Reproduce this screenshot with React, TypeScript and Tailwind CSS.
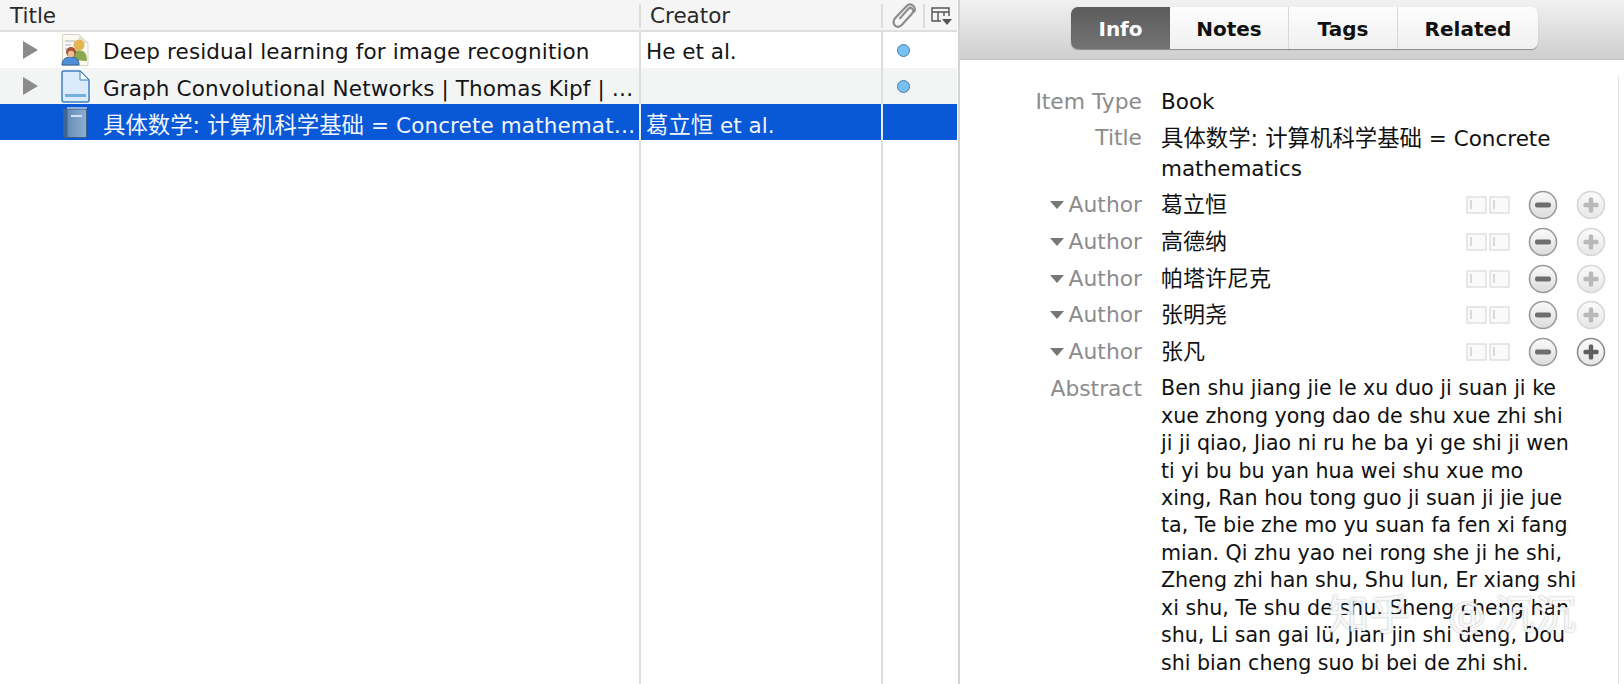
const FONT = "font-['DejaVu_Sans','Noto_Sans_CJK_SC',sans-serif]";

function Arrow() {
  return (
    <svg width="15" height="18" viewBox="0 0 15 18">
      <path d="M0 0 L15 9 L0 18 Z" fill="#8b8b8b" />
    </svg>
  );
}

function PeopleIcon() {
  return (
    <svg width="28" height="32" viewBox="0 0 28 32">
      <path d="M1.5 .5 H18 L27 9 V31.5 H1.5 Z" fill="#fbfaf2" stroke="#d8d4c4" />
      <path d="M18 .5 V9 H27 Z" fill="#e4e0d0" />
      <path d="M4 7 H14 M4 11 H10 M4 15 H8" stroke="#c9c9c9" strokeWidth="1.5" />
      <circle cx="18" cy="11" r="5.5" fill="#e5b455" />
      <path d="M10 26 C10 18 14 16 18 16.5 C23 16 26 19 26 27 Z" fill="#8aa94c" />
      <circle cx="10" cy="18" r="5" fill="#a9543a" />
      <path d="M1 31 C1 25 5 23 10 23 C15 23 18 25 18 31 Z" fill="#4f8fd8" stroke="#2f5e9c" />
      <circle cx="10" cy="20" r="3.2" fill="#efbd95" />
    </svg>
  );
}

function PageIcon() {
  return (
    <svg width="29" height="33" viewBox="0 0 29 33">
      <path d="M1 3 Q1 1 3 1 H19 L28 10 V30 Q28 32 26 32 H3 Q1 32 1 30 Z" fill="#dcebfb" stroke="#3f7fc0" strokeWidth="1.5" />
      <path d="M19 1 V10 H28 Z" fill="#f7fbff" stroke="#3f7fc0" strokeWidth="1" />
      <rect x="4" y="24" width="21" height="3" fill="#76aede" />
    </svg>
  );
}

function BookIcon() {
  return (
    <svg width="25" height="31" viewBox="0 0 25 31">
      <defs>
        <linearGradient id="bk" x1="0" x2="1" y1="0" y2="0">
          <stop offset="0" stopColor="#5e86b0" />
          <stop offset="1" stopColor="#8fb0d0" />
        </linearGradient>
      </defs>
      <rect x=".5" y="2" width="23" height="28.5" rx="1.5" fill="url(#bk)" stroke="#3d5f86" />
      <rect x=".5" y="2" width="4" height="28.5" fill="#3f6690" />
      <rect x="8" y="8" width="11" height="2" fill="#d4e2f0" />
      <path d="M4 1 H24" stroke="#b9cde0" strokeWidth="1.5" />
    </svg>
  );
}

function Clip() {
  return (
    <svg width="27" height="27" viewBox="0 0 24 24" fill="none" stroke="#8d8d8d" strokeWidth="2">
      <path d="M20 3.5 C18 1.5 15.5 2 14 3.5 L4 14 C1.5 16.5 2 19.5 3.5 21 C5.5 22.5 8 22 9.5 20.5 L19 10 C20 8.5 20 7 19 6 C18 5 16.5 5 15.5 6 L7.5 15" />
      <path d="M20 3.5 C21.5 5 21.5 7.5 20.5 9" />
    </svg>
  );
}

function ColumnPicker() {
  return (
    <svg width="21" height="18" viewBox="0 0 21 18" fill="none" stroke="#555" strokeWidth="1.4">
      <path d="M10 14 H1 V1 H18 V9 M1 5 H18 M7 5 V14 M13 5 V9" />
      <path d="M11 12 H21 L16 18 Z" fill="#555" stroke="none" />
    </svg>
  );
}

function Dot() {
  return <div className="w-[13px] h-[13px] rounded-full bg-[#76c0f5] border-[1.5px] border-[#4c7fa5]" />;
}

function HeaderSep() {
  return <div className="w-[2px] h-[24px] bg-[#dcdcdc] shrink-0" />;
}

function Cjk({ children }: { children: React.ReactNode }) {
  return <span className="text-[22.4px] tracking-normal">{children}</span>;
}

type RowProps = {
  bg: string;
  arrow?: boolean;
  icon: React.ReactNode;
  title: React.ReactNode;
  creator?: React.ReactNode;
  dot?: boolean;
  selected?: boolean;
  textPad: string;
};

function Row({ bg, arrow, icon, title, creator, dot, selected, textPad }: RowProps) {
  const sep = selected ? "bg-[#e8eefa]" : "bg-[#dedede]";
  return (
    <div className={`flex items-center shrink-0 h-[36px] ${bg} ${selected ? "text-[#f2f6ff]" : "text-[#151515]"}`}>
      <div className="w-[639px] flex items-center shrink-0">
        <div className="w-[23px] shrink-0" />
        <div className="w-[15px] h-[18px] shrink-0 flex">{arrow && <Arrow />}</div>
        <div className="w-[65px] shrink-0 flex justify-center pl-[9px]">{icon}</div>
        <div className={`truncate w-[536px] pr-[2px] text-[21.5px] tracking-[0.12px] leading-[30px] ${textPad}`}>{title}</div>
      </div>
      <div className={`w-[2px] h-full shrink-0 ${sep}`} />
      <div className={`w-[240px] pl-[5px] text-[21.5px] leading-[30px] shrink-0 truncate ${textPad}`}>{creator}</div>
      <div className={`w-[2px] h-full shrink-0 ${sep}`} />
      <div className="w-[40px] flex justify-center shrink-0">{dot && <Dot />}</div>
      <div className="flex-1" />
    </div>
  );
}

function MinusBtn() {
  return (
    <svg width="30" height="30" viewBox="0 0 30 30">
      <defs>
        <linearGradient id="mb" x1="0" x2="0" y1="0" y2="1">
          <stop offset="0" stopColor="#fafafa" />
          <stop offset="1" stopColor="#dcdcdc" />
        </linearGradient>
      </defs>
      <circle cx="15" cy="15" r="13.5" fill="url(#mb)" stroke="#9a9a9a" strokeWidth="1.6" />
      <rect x="7" y="12.5" width="16" height="5" rx="2" fill="#6e6e6e" />
    </svg>
  );
}

function PlusBtn({ active }: { active?: boolean }) {
  const c = active ? "#5f5f5f" : "#b9b9b9";
  const s = active ? "#8c8c8c" : "#d6d6d6";
  return (
    <svg width="30" height="30" viewBox="0 0 30 30">
      <defs>
        <linearGradient id="pb" x1="0" x2="0" y1="0" y2="1">
          <stop offset="0" stopColor="#fbfbfb" />
          <stop offset="1" stopColor="#e6e6e6" />
        </linearGradient>
      </defs>
      <circle cx="15" cy="15" r="13.5" fill="url(#pb)" stroke={s} strokeWidth="1.6" />
      <rect x="7.5" y="12.8" width="15" height="4.4" rx="1.5" fill={c} />
      <rect x="12.8" y="7.5" width="4.4" height="15" rx="1.5" fill={c} />
    </svg>
  );
}

function SplitIcon() {
  return (
    <svg width="44" height="18" viewBox="0 0 44 18" fill="none" stroke="#dcdcdc" strokeWidth="1.3">
      <rect x="1" y="1" width="19" height="16" fill="#fafafa" />
      <rect x="24" y="1" width="19" height="16" fill="#fafafa" />
      <path d="M5 4 V13 M28 4 V13" stroke="#c8c8c8" />
    </svg>
  );
}

function Author({ name, active }: { name: string; active?: boolean }) {
  return (
    <div className="flex items-center h-[36.7px]">
      <div className="w-[182px] shrink-0 flex items-center justify-end text-[#8c8c8c] text-[21.8px] leading-[30px]">
        <svg width="14" height="8" viewBox="0 0 14 8" className="mr-[5px] -ml-[2px]">
          <path d="M0 0 H14 L7 8 Z" fill="#777" />
        </svg>
        Author
      </div>
      <div className="ml-[19px] w-[305px] text-[22px] text-[#111] leading-[30px]">{name}</div>
      <SplitIcon />
      <div className="ml-[18px]"><MinusBtn /></div>
      <div className="ml-[18px]"><PlusBtn active={active} /></div>
    </div>
  );
}

const ABSTRACT = [
  "Ben shu jiang jie le xu duo ji suan ji ke",
  "xue zhong yong dao de shu xue zhi shi",
  "ji ji qiao, Jiao ni ru he ba yi ge shi ji wen",
  "ti yi bu bu yan hua wei shu xue mo",
  "xing, Ran hou tong guo ji suan ji jie jue",
  "ta, Te bie zhe mo yu suan fa fen xi fang",
  "mian. Qi zhu yao nei rong she ji he shi,",
  "Zheng zhi han shu, Shu lun, Er xiang shi",
  "xi shu, Te shu de shu, Sheng cheng han",
  "shu, Li san gai lü, Jian jin shi deng, Dou",
  "shi bian cheng suo bi bei de zhi shi.",
];

export default function App() {
  return (
    <div className={`flex w-[1624px] h-[684px] overflow-hidden bg-white ${FONT}`}>
      <div className="w-[960px] shrink-0 flex flex-col border-r-[2px] border-[#d4d4d4] bg-white pr-[1px]">
        <div className="h-[32px] shrink-0 flex items-center bg-[#f5f5f5] border-b-[2px] border-[#dfdfdf] text-[#2a2a2a] text-[21.5px] pt-[1px]">
          <div className="w-[639px] pl-[10px] shrink-0 leading-[30px] pt-[1px]">Title</div>
          <HeaderSep />
          <div className="w-[240px] pl-[9px] shrink-0 leading-[30px] pt-[1px]">Creator</div>
          <HeaderSep />
          <div className="w-[40px] flex justify-center shrink-0 pl-[2px]"><Clip /></div>
          <HeaderSep />
          <div className="flex-1 flex justify-center"><ColumnPicker /></div>
        </div>
        <Row textPad="pt-[4px]" bg="bg-white" arrow icon={<PeopleIcon />} title="Deep residual learning for image recognition" creator="He et al." dot />
        <Row textPad="pt-[6px]" bg="bg-[#f3f4f4]" arrow icon={<PageIcon />} title="Graph Convolutional Networks | Thomas Kipf | University of Amsterdam" dot />
        <Row textPad="pt-[7px]" bg="bg-[#0858d8]" icon={<BookIcon />} title={<><Cjk>具体数学: 计算机科学基础</Cjk> = Concrete mathematics and more</>} creator={<><Cjk>葛立恒</Cjk> et al.</>} selected />
        <div className="flex-1 flex">
          <div className="w-[639px] shrink-0" />
          <div className="w-[2px] bg-[#dedede] shrink-0" />
          <div className="w-[240px] shrink-0" />
          <div className="w-[2px] bg-[#dedede] shrink-0" />
        </div>
      </div>

      <div className="flex-1 flex flex-col relative">
        <div className="h-[60px] shrink-0 flex justify-center pt-[7px] pl-[25px] bg-gradient-to-b from-[#f1f1f1] to-[#cfcfcf] border-b border-[#c4c4c4]">
          <div className="flex h-[42px] rounded-[7px] overflow-hidden text-[20px] font-bold shadow-[0_1px_1px_rgba(0,0,0,0.35)]">
            <div className="w-[99px] pt-[2px] flex items-center justify-center bg-gradient-to-b from-[#5c5c5c] to-[#737373] text-white">Info</div>
            <div className="w-[119px] pt-[2px] flex items-center justify-center bg-gradient-to-b from-[#fdfdfd] to-[#f0f0f0] text-[#111] border-r border-[#d8d8d8]">Notes</div>
            <div className="w-[109px] pt-[2px] flex items-center justify-center bg-gradient-to-b from-[#fdfdfd] to-[#f0f0f0] text-[#111] border-r border-[#d8d8d8]">Tags</div>
            <div className="w-[140px] pt-[2px] flex items-center justify-center bg-gradient-to-b from-[#fdfdfd] to-[#f0f0f0] text-[#111]">Related</div>
          </div>
        </div>

        <div className="flex-1 min-h-0 overflow-hidden pr-[5px]">
          <div className="border-r border-[#e4e4e4] h-full mt-[16px]">
            <div className="pt-[8px]">
              <div className="flex h-[39px] items-start pt-[3px]">
                <div className="w-[182px] shrink-0 flex justify-end"><span className="text-[#8c8c8c] text-[21.8px] leading-[30px]">Item Type</span></div>
                <div className="ml-[19px] text-[21.5px] text-[#111] leading-[30px]">Book</div>
              </div>
              <div className="flex mb-[3px]">
                <div className="w-[182px] shrink-0 flex justify-end"><span className="text-[#8c8c8c] text-[21.8px] leading-[30px]">Title</span></div>
                <div className="ml-[19px] w-[420px] text-[21.5px] text-[#111] leading-[30px]"><Cjk>具体数学: 计算机科学基础</Cjk> = Concrete mathematics</div>
              </div>
              <Author name="葛立恒" />
              <Author name="高德纳" />
              <Author name="帕塔许尼克" />
              <Author name="张明尧" />
              <Author name="张凡" active />
              <div className="flex mt-[5px]">
                <div className="w-[182px] shrink-0 flex justify-end"><span className="text-[#8c8c8c] text-[21.8px] leading-[27.4px]">Abstract</span></div>
                <div className="ml-[19px] text-[20.6px] text-[#111] leading-[27.4px] whitespace-nowrap">
                  {ABSTRACT.map((l) => <div key={l}>{l}</div>)}
                </div>
              </div>
            </div>
          </div>
        </div>

        <div className="absolute left-[368px] top-[590px] flex items-center text-[41px] leading-[50px] text-white/90 [text-shadow:0_0_2px_rgba(0,0,0,0.35)] whitespace-nowrap">
          <span>知乎</span>
          <span className="ml-[38px] text-[38px]">@</span>
          <span className="ml-[8px]">沉沉</span>
        </div>
      </div>
    </div>
  );
}
